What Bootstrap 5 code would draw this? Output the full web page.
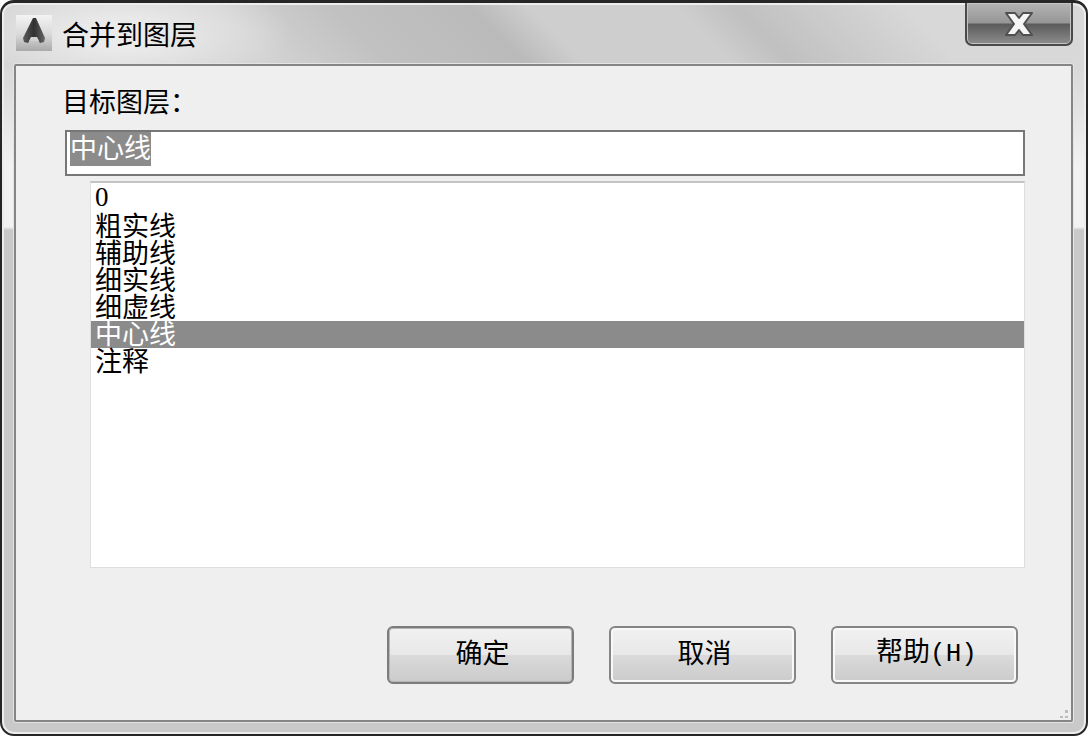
<!DOCTYPE html>
<html lang="zh-CN">
<head>
<meta charset="utf-8">
<meta name="viewport" content="width=device-width, initial-scale=1">
<title>合并到图层</title>
<link href="https://cdn.jsdelivr.net/npm/bootstrap@5.3.0/dist/css/bootstrap.min.css" rel="stylesheet">
<style>
  body, .title-text, .action-btn, .target-input, .layer-list {
    font-family: "Noto Sans CJK SC", sans-serif;
    font-size: 27px;
    line-height: 27px;
    color: #000;
  }
  .dialog-window {
    border: 2px solid #262626;
    border-top-width: 3px;
    border-radius: 14px;
    box-shadow: inset 0 0 0 2px #ededed;
    padding: 0 13px 12px 12px;
    background:
      linear-gradient(#d8d8d8, #f2f2f2 100px, #f2f2f2 160px, #c9c9c9 163px) 0 64px / 100% 100% no-repeat,
      radial-gradient(ellipse 170px 60px at 120px 32px, #ebebeb 20%, transparent 100%),
      linear-gradient(45deg, transparent 24%, #c1c1c1 34%, #bababa 46%, #cecece 51%, #cecece 64%, #c0c0c0 69%, #d8d8d8 84%) 0 0 / 100% 64px no-repeat,
      #d2d2d2;
  }
  .title-bar { height: 61px; }
  .title-text { margin: 17px 0 0 10px; }
  .app-icon { margin: 12px 0 0 2px; }
  .close-btn {
    width: 108px;
    height: 43px;
    border: 2px solid #4a4a4a;
    border-top: 0;
    border-radius: 0 0 7px 7px;
    box-shadow: inset 0 0 0 1px #c4c4c4;
    background: linear-gradient(#b4b4b4, #969696 48%, #5b5b5b 52%, #8d8d8d);
  }
  .dialog-panel {
    border: 2px solid #858585;
    border-radius: 2px;
    background: #efefef;
    box-shadow: 0 0 0 1px #e4e4e4;
    padding: 21px 46px 36px 46px;
  }
  .target-input {
    height: 46px;
    margin-left: 3px;
    width: auto;
    border: 2px solid #777;
    padding: 0 3px 14px;
    background: #fff;
  }
  .target-input:focus { border-color: #777; box-shadow: none; background: #fff; color: #000; }
  .target-input::selection { background: #8b8b8b; color: #fff; }
  .layer-list.form-select[size]:not([size="1"]) {
    height: 387px;
    margin: 5px 0 0 28px;
    width: auto;
    border: 1px solid #dedede;
    border-top: 2px solid #c4c4c4;
    padding: 3px 0 2px;
    background: #fff;
    font-family: "Liberation Serif", "Noto Sans CJK SC", sans-serif;
    overflow: hidden;
    scrollbar-width: none;
  }
  .layer-list::-webkit-scrollbar { display: none; }
  .layer-list option {
    display: flex;
    align-items: center;
    height: 27px;
    min-height: 27px;
    padding: 0 4px 4px;
    color: #000;
    overflow: visible;
  }
  .layer-list option:checked { background: #8b8b8b linear-gradient(#8b8b8b, #8b8b8b); color: #fff; }
  .action-row { gap: 35px; margin-top: 58px; padding-right: 7px; }
  .action-btn {
    width: 187px;
    height: 58px;
    border: 2px solid #858585;
    border-radius: 6px;
    padding: 0 0 8px 4px;
    box-shadow: inset 0 0 0 2px #f8f8f8;
    background: linear-gradient(#f1f1f1, #e8e8e8 49%, #dadada 51%, #cbcbcb);
  }
  .action-btn.default-btn { box-shadow: inset 0 0 0 1px #b5b5b5; border-color: #7c7c7c; }
  .hot-key { font-family: "Liberation Mono", monospace; font-size: 26px; line-height: 1; }
</style>
</head>
<body class="bg-white">
<main class="dialog-window min-vh-100 d-flex flex-column">
  <header class="title-bar d-flex align-items-start">
    <svg class="app-icon flex-shrink-0" width="36" height="36" viewBox="0 0 36 36" aria-hidden="true">
      <defs>
        <linearGradient id="tile" x1="0" y1="0" x2="0" y2="1"><stop offset="0" stop-color="#f4f4f4"/><stop offset=".55" stop-color="#d8d8d8"/><stop offset="1" stop-color="#a9a9a9"/></linearGradient>
        <linearGradient id="mark" x1="0" y1="0" x2="1" y2="0"><stop offset="0" stop-color="#5c5c5c"/><stop offset=".5" stop-color="#303030"/><stop offset="1" stop-color="#686868"/></linearGradient>
      </defs>
      <rect width="36" height="36" fill="url(#tile)"/>
      <path d="M17 3h3l9 20-1 4-4 1-3-5h-6l-3 5-4-1-1-4z" fill="url(#mark)"/>
      <path d="M15 22h6l2 4H13z" fill="#d0d0d0"/>
    </svg>
    <h1 class="title-text fw-normal flex-grow-1">合并到图层</h1>
    <button type="button" class="close-btn p-0 d-flex align-items-center justify-content-center" aria-label="关闭">
      <svg width="30" height="26" viewBox="0 0 30 26" aria-hidden="true">
        <path d="M2 2h9l4 5 4-5h9l-8 11 8 11h-9l-4-5-4 5H2l8-11z" fill="#f5f5f5" stroke="#505050" stroke-width="2" stroke-linejoin="round"/>
      </svg>
    </button>
  </header>
  <form class="dialog-panel position-relative flex-grow-1 d-flex flex-column" onsubmit="return false">
    <label for="target" class="align-self-start mb-3">目标图层：</label>
    <input id="target" type="text" class="target-input form-control rounded-0" value="中心线" autocomplete="off" spellcheck="false">
    <select class="layer-list form-select rounded-0" size="14" aria-label="图层列表">
      <option>0</option>
      <option>粗实线</option>
      <option>辅助线</option>
      <option>细实线</option>
      <option>细虚线</option>
      <option selected>中心线</option>
      <option>注释</option>
    </select>
    <div class="action-row d-flex justify-content-end">
      <button type="submit" class="btn action-btn default-btn">确定</button>
      <button type="button" class="btn action-btn">取消</button>
      <button type="button" class="btn action-btn">帮助<span class="hot-key">(H)</span></button>
    </div>
    <svg class="position-absolute bottom-0 end-0" width="14" height="12" viewBox="0 0 14 12" aria-hidden="true">
      <path d="M8 2h3v3H8zM3 8h3v2H3zM8 8h3v2H8z" fill="#bdbdbd"/>
    </svg>
  </form>
</main>
<script src="https://cdn.jsdelivr.net/npm/bootstrap@5.3.0/dist/js/bootstrap.bundle.min.js"></script>
<script>
  const target = document.getElementById('target');
  target.focus();
  target.select();
</script>
</body>
</html>
